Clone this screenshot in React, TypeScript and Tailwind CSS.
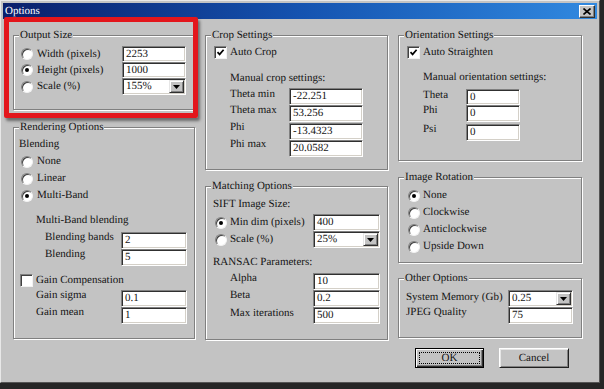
import React from 'react'

function Radio({ checked }: { checked?: boolean }) {
  return (
    <span className="box-border w-[12px] h-[12px] shrink-0 rounded-full bg-white border border-t-[#808080] border-l-[#808080] border-b-[#f2f2f2] border-r-[#f2f2f2] shadow-[inset_1px_1px_0_#404040] flex items-center justify-center">
      {checked && <span className="w-[4px] h-[4px] rounded-full bg-black" />}
    </span>
  )
}

function Check({ checked }: { checked?: boolean }) {
  return (
    <span className="box-border w-[13px] h-[13px] shrink-0 bg-white border border-t-[#808080] border-l-[#808080] border-b-[#f2f2f2] border-r-[#f2f2f2] shadow-[inset_1px_1px_0_#404040] flex items-center justify-center">
      {checked && (
        <svg width="9" height="9" viewBox="0 0 9 9">
          <path d="M1.5 4.2 L3.6 6.4 L7.6 1.8" stroke="black" strokeWidth="1.7" fill="none" />
        </svg>
      )}
    </span>
  )
}

function Field({ value, className }: { value: string; className: string }) {
  return (
    <div className={`box-border shrink-0 bg-white border border-t-[#808080] border-l-[#808080] border-b-white border-r-white shadow-[inset_1px_1px_0_#303030,inset_-1px_-1px_0_#d4d0c8] pl-[3px] flex items-center leading-[13px] ${className}`}>
      {value}
    </div>
  )
}

function Combo({ value, className }: { value: string; className: string }) {
  return (
    <div className={`box-border shrink-0 bg-white border border-t-[#808080] border-l-[#808080] border-b-white border-r-white shadow-[inset_1px_1px_0_#303030,inset_-1px_-1px_0_#d4d0c8] pl-[3px] pr-[1px] flex items-center justify-between leading-[13px] ${className}`}>
      <span>{value}</span>
      <span className="box-border w-[15px] h-[13px] bg-[#c3c3c3] border border-t-[#e6e6e6] border-l-[#e6e6e6] border-b-[#303030] border-r-[#303030] shadow-[inset_1px_1px_0_#fff,inset_-1px_-1px_0_#808080] flex items-center justify-center">
        <svg width="7" height="4" viewBox="0 0 7 4">
          <path d="M0 0 H7 L3.5 4 Z" fill="black" />
        </svg>
      </span>
    </div>
  )
}

function Group({ title, className, children }: { title: string; className: string; children: React.ReactNode }) {
  return (
    <div className={`relative box-border border border-[#808080] shadow-[inset_1px_1px_0_#fff,1px_1px_0_#fff] flex flex-col ${className}`}>
      <span className="absolute left-[5px] -top-[7px] px-[1px] bg-[#c3c3c3] leading-[12px]">{title}</span>
      {children}
    </div>
  )
}

export default function App() {
  return (
    <div className="w-[604px] h-[389px] bg-[#262626] overflow-hidden [font-family:Liberation_Serif,Times_New_Roman,serif] [text-rendering:geometricPrecision] font-normal text-[11px] text-[#141414]">
      <div className="relative box-border w-[600px] h-[383px] bg-[#c3c3c3] border border-t-[#e8e8e8] border-l-[#e8e8e8] border-b-[#555] border-r-[#555] p-[2px]">
        {/* title bar */}
        <div className="h-[16px] flex items-center justify-between pl-[2px] pr-[2px] bg-gradient-to-r from-[#0a1f6b] via-[#1553b0] to-[#3189e0]">
          <span className="text-white leading-[14px]">Options</span>
          <span className="box-border w-[16px] h-[13px] bg-[#c3c3c3] border border-t-white border-l-white border-b-[#303030] border-r-[#303030] shadow-[inset_-1px_-1px_0_#808080] flex items-center justify-center">
            <svg width="8" height="7" viewBox="0 0 8 7">
              <path d="M0.5 0.5 L7.5 6.5 M7.5 0.5 L0.5 6.5" stroke="black" strokeWidth="1.6" />
            </svg>
          </span>
        </div>

        <div className="flex pl-[10px] gap-[10px]">
          {/* column 1 */}
          <div className="w-[182px] flex flex-col">
            <Group title="Output Size" className="mt-[16px] h-[75px] pt-[10px] pl-[7px]">
              <div className="flex h-[16px]">
                <div className="w-[101px] flex items-center gap-[4px]"><Radio /><span>Width (pixels)</span></div>
                <Field value="2253" className="w-[64px] h-[16px]" />
              </div>
              <div className="flex h-[16px]">
                <div className="w-[101px] flex items-center gap-[4px]"><Radio checked /><span>Height (pixels)</span></div>
                <Field value="1000" className="w-[64px] h-[16px]" />
              </div>
              <div className="flex h-[17px]">
                <div className="w-[101px] flex items-center gap-[4px]"><Radio /><span>Scale (%)</span></div>
                <Combo value="155%" className="w-[64px] h-[17px]" />
              </div>
            </Group>

            <Group title="Rendering Options" className="mt-[17px] h-[212px] pt-[8px] pl-[7px]">
              <div className="h-[17px] flex items-center -ml-[2px]">Blending</div>
              <div className="h-[17px] flex items-center gap-[4px]"><Radio /><span>None</span></div>
              <div className="h-[17px] flex items-center gap-[4px]"><Radio /><span>Linear</span></div>
              <div className="h-[17px] flex items-center gap-[4px]"><Radio checked /><span>Multi-Band</span></div>
              <div className="mt-[8px] h-[17px] flex items-center pl-[15px]">Multi-Band blending</div>
              <div className="mt-[3px] flex h-[17px]">
                <span className="w-[100px] pl-[24px] leading-[10px]">Blending bands</span>
                <Field value="2" className="w-[66px] h-[17px]" />
              </div>
              <div className="flex h-[17px]">
                <span className="w-[100px] pl-[24px] leading-[10px]">Blending</span>
                <Field value="5" className="w-[66px] h-[17px]" />
              </div>
              <div className="mt-[8px] h-[13px] flex items-center gap-[3px] -ml-[1px]"><Check /><span>Gain Compensation</span></div>
              <div className="mt-[3px] flex h-[17px]">
                <span className="w-[100px] pl-[15px] leading-[10px]">Gain sigma</span>
                <Field value="0.1" className="w-[66px] h-[17px]" />
              </div>
              <div className="flex h-[17px]">
                <span className="w-[100px] pl-[15px] leading-[10px]">Gain mean</span>
                <Field value="1" className="w-[66px] h-[17px]" />
              </div>
            </Group>
          </div>

          {/* column 2 */}
          <div className="w-[183px] flex flex-col">
            <Group title="Crop Settings" className="mt-[16px] h-[135px] pt-[10px] pl-[8px]">
              <div className="h-[13px] flex items-center gap-[3px]"><Check checked /><span>Auto Crop</span></div>
              <div className="mt-[11px] h-[17px] flex items-center pl-[16px]">Manual crop settings:</div>
              <div className="mt-[1px] flex h-[17px]">
                <span className="w-[75px] pl-[16px] leading-[12px]">Theta min</span>
                <Field value="-22.251" className="w-[74px] h-[17px]" />
              </div>
              <div className="flex h-[17px]">
                <span className="w-[75px] pl-[16px] leading-[10px]">Theta max</span>
                <Field value="53.256" className="w-[74px] h-[17px]" />
              </div>
              <div className="mt-[1px] flex h-[17px]">
                <span className="w-[75px] pl-[16px] leading-[8px]">Phi</span>
                <Field value="-13.4323" className="w-[74px] h-[17px]" />
              </div>
              <div className="flex h-[17px]">
                <span className="w-[75px] pl-[16px] leading-[8px]">Phi max</span>
                <Field value="20.0582" className="w-[74px] h-[17px]" />
              </div>
            </Group>

            <Group title="Matching Options" className="mt-[16px] h-[154px] pt-[9px] pl-[8px]">
              <div className="h-[17px] flex items-center -ml-[1px]">SIFT Image Size:</div>
              <div className="mt-[1px] flex h-[17px]">
                <div className="w-[99px] flex items-center gap-[3px] pl-[1px]"><Radio checked /><span>Min dim (pixels)</span></div>
                <Field value="400" className="w-[67px] h-[17px]" />
              </div>
              <div className="flex h-[17px]">
                <div className="w-[99px] flex items-center gap-[3px] pl-[1px]"><Radio /><span>Scale (%)</span></div>
                <Combo value="25%" className="w-[67px] h-[17px]" />
              </div>
              <div className="mt-[6px] h-[17px] flex items-center -ml-[1px]">RANSAC Parameters:</div>
              <div className="mt-[2px] flex h-[17px]">
                <span className="w-[99px] pl-[16px] leading-[10px]">Alpha</span>
                <Field value="10" className="w-[67px] h-[17px]" />
              </div>
              <div className="flex h-[17px]">
                <span className="w-[99px] pl-[16px] leading-[10px]">Beta</span>
                <Field value="0.2" className="w-[67px] h-[17px]" />
              </div>
              <div className="flex h-[17px]">
                <span className="w-[99px] pl-[16px] leading-[12px]">Max iterations</span>
                <Field value="500" className="w-[67px] h-[17px]" />
              </div>
            </Group>
          </div>

          {/* column 3 */}
          <div className="w-[184px] flex flex-col">
            <Group title="Orientation Settings" className="mt-[16px] h-[126px] pt-[10px] pl-[8px]">
              <div className="h-[13px] flex items-center gap-[3px]"><Check checked /><span>Auto Straighten</span></div>
              <div className="mt-[10px] h-[17px] flex items-center pl-[16px]">Manual orientation settings:</div>
              <div className="mt-[3px] flex h-[16px]">
                <span className="w-[59px] pl-[16px] leading-[12px]">Theta</span>
                <Field value="0" className="w-[54px] h-[16px]" />
              </div>
              <div className="flex h-[17px]">
                <span className="w-[59px] pl-[16px] leading-[10px]">Phi</span>
                <Field value="0" className="w-[54px] h-[17px]" />
              </div>
              <div className="mt-[2px] flex h-[17px]">
                <span className="w-[59px] pl-[16px] leading-[10px]">Psi</span>
                <Field value="0" className="w-[54px] h-[17px]" />
              </div>
            </Group>

            <Group title="Image Rotation" className="mt-[16px] h-[86px] pt-[9px] pl-[9px]">
              <div className="h-[17px] flex items-center gap-[3px]"><Radio checked /><span>None</span></div>
              <div className="h-[17px] flex items-center gap-[3px]"><Radio /><span>Clockwise</span></div>
              <div className="h-[17px] flex items-center gap-[3px]"><Radio /><span>Anticlockwise</span></div>
              <div className="h-[17px] flex items-center gap-[3px]"><Radio /><span>Upside Down</span></div>
            </Group>

            <Group title="Other Options" className="mt-[15px] h-[60px] pt-[11px] pl-[8px]">
              <div className="flex h-[17px]">
                <span className="w-[101px] -ml-[1px] leading-[14px]">System Memory (Gb)</span>
                <Combo value="0.25" className="ml-[1px] w-[65px] h-[17px]" />
              </div>
              <div className="flex h-[17px]">
                <span className="w-[101px] -ml-[1px] leading-[10px]">JPEG Quality</span>
                <Field value="75" className="ml-[1px] w-[65px] h-[17px]" />
              </div>
            </Group>

            <div className="mt-[10px] flex pl-[17px] gap-[15px]">
              <div className="box-border w-[69px] h-[20px] border border-black bg-[#c3c3c3] shadow-[inset_1px_1px_0_#fff,inset_-1px_-1px_0_#303030,inset_-2px_-2px_0_#808080] p-[3px] flex">
                <div className="flex-1 border border-dotted border-black flex items-center justify-center leading-[11px]">OK</div>
              </div>
              <div className="box-border w-[70px] h-[20px] border border-t-white border-l-white border-b-[#202020] border-r-[#202020] bg-[#c3c3c3] shadow-[inset_1px_1px_0_#e6e6e6,inset_-1px_-1px_0_#808080] flex items-center justify-center leading-[11px]">
                Cancel
              </div>
            </div>
          </div>
        </div>

        {/* red highlight annotation */}
        <div className="absolute left-[3px] top-[16px] w-[194px] h-[101px] box-border border-[5px] border-[#e3161c] rounded-[2px] shadow-[2px_3px_3px_rgba(0,0,0,0.45)]" />
      </div>
    </div>
  )
}
